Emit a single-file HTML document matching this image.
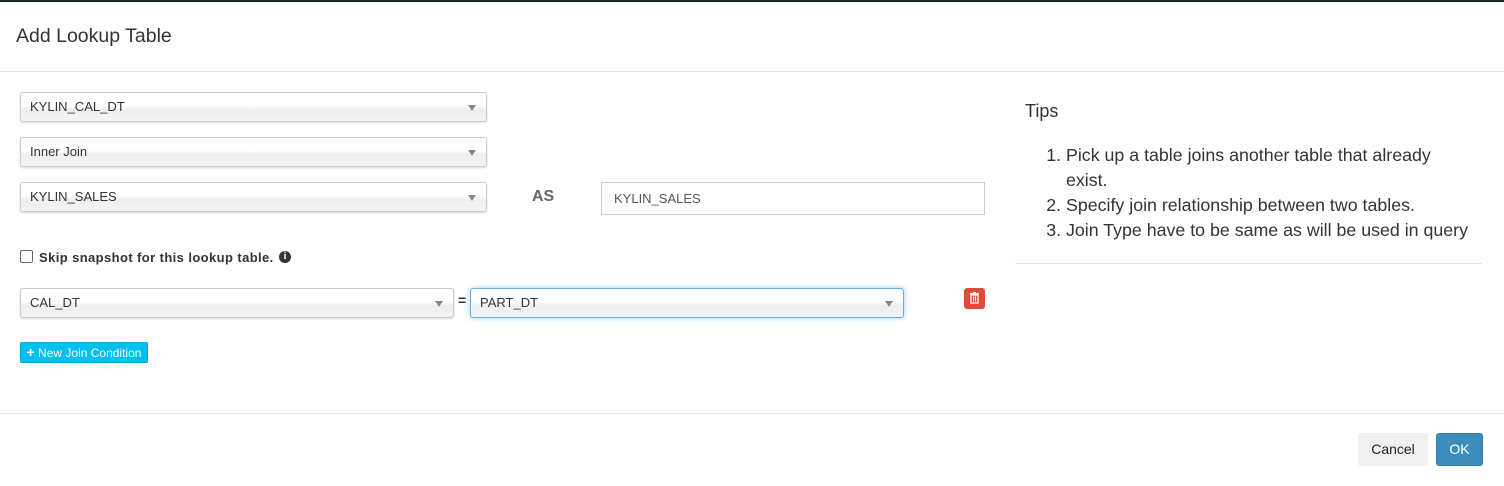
<!DOCTYPE html>
<html><head><style>
body{margin:0;width:1504px;height:486px;background:#fff;font-family:"Liberation Sans",Arial,sans-serif;color:#333;position:relative;overflow:hidden}
.a{position:absolute}
.sel{position:absolute;box-sizing:border-box;border:1px solid #ccc;border-radius:3px;background:linear-gradient(#fff 0%,#fff 45%,#eee 60%,#f4f4f4 100%);box-shadow:0 1px 2px rgba(0,0,0,.15);font-size:13px;padding-left:9px;color:#333}
.sel:after{content:"";position:absolute;right:10px;top:12px;border-left:4px solid transparent;border-right:4px solid transparent;border-top:6px solid #888}
</style></head><body>
<div class="a" style="left:0;top:0;width:1504px;height:2px;background:#1e2a28"></div>
<div class="a" style="left:16px;top:25px;font-size:19.5px;color:#333">Add Lookup Table</div>
<div class="a" style="left:0;top:71px;width:1504px;height:1px;background:#e5e5e5"></div>

<div class="sel" style="left:20px;top:92px;width:467px;height:30px;line-height:28px">KYLIN_CAL_DT</div>
<div class="sel" style="left:20px;top:137px;width:467px;height:30px;line-height:28px">Inner Join</div>
<div class="sel" style="left:20px;top:182px;width:467px;height:30px;line-height:28px">KYLIN_SALES</div>
<div class="a" style="left:532px;top:188px;font-size:16px;font-weight:bold;color:#666">AS</div>
<div class="a" style="left:601px;top:182px;width:384px;height:33px;box-sizing:border-box;border:1px solid #ccc;font-size:13px;line-height:31px;padding-left:12px;color:#555">KYLIN_SALES</div>

<div class="a" style="left:20px;top:250px;width:11px;height:11px;border:1px solid #666;border-radius:2px;background:#fff"></div>
<div class="a" style="left:39px;top:250px;font-size:13px;font-weight:bold;letter-spacing:0.4px">Skip snapshot for this lookup table.</div>
<div class="a" style="left:279px;top:251px;width:12px;height:12px;border-radius:50%;background:#333;color:#fff;font-size:10px;font-weight:bold;text-align:center;line-height:12px;font-family:'Liberation Serif',serif">i</div>

<div class="sel" style="left:20px;top:288px;width:434px;height:30px;line-height:28px">CAL_DT</div>
<div class="a" style="left:458px;top:292px;font-size:14px;font-weight:bold">=</div>
<div class="sel" style="left:470px;top:288px;width:434px;height:30px;line-height:28px;border-color:#66afe9;box-shadow:0 0 6px rgba(102,175,233,.6)">PART_DT</div>
<div class="a" style="left:964px;top:288px;width:21px;height:21px;background:#dd4b39;border-radius:3px">
<svg width="21" height="21"><rect x="7" y="7" width="7" height="8" fill="none" stroke="#fff" stroke-width="1.3"/><rect x="6" y="5" width="9" height="1.5" fill="#fff"/><rect x="9" y="4" width="3" height="1" fill="#fff"/><line x1="9.5" y1="8.5" x2="9.5" y2="13.5" stroke="#fff"/><line x1="11.5" y1="8.5" x2="11.5" y2="13.5" stroke="#fff"/></svg></div>

<div class="a" style="left:20px;top:342px;width:128px;height:21px;background:#00c0ef;border:1px solid #00acd6;box-sizing:border-box;border-radius:2px;color:#fff;font-size:12px;line-height:19px;text-align:center"><b style="font-size:14px">+</b> New Join Condition</div>

<div class="a" style="left:1025px;top:101px;font-size:18px;color:#333">Tips</div>
<ol class="a" style="left:1025px;top:143px;margin:0;padding-left:41px;width:385px;font-size:17.8px;line-height:25px;color:#333">
<li>Pick up a table joins another table that already exist.</li>
<li>Specify join relationship between two tables.</li>
<li style="white-space:nowrap">Join Type have to be same as will be used in query</li>
</ol>
<div class="a" style="left:1015px;top:263px;width:467px;height:1px;background:#e5e5e5"></div>

<div class="a" style="left:0;top:413px;width:1504px;height:1px;background:#e5e5e5"></div>
<div class="a" style="left:1358px;top:433px;width:70px;height:33px;background:#f0f0f0;border-radius:3px;font-size:14px;line-height:33px;text-align:center;color:#222">Cancel</div>
<div class="a" style="left:1436px;top:433px;width:47px;height:33px;background:#3c8dbc;border:1px solid #367fa9;box-sizing:border-box;border-radius:3px;font-size:14px;line-height:31px;text-align:center;color:#fff">OK</div>
</body></html>
